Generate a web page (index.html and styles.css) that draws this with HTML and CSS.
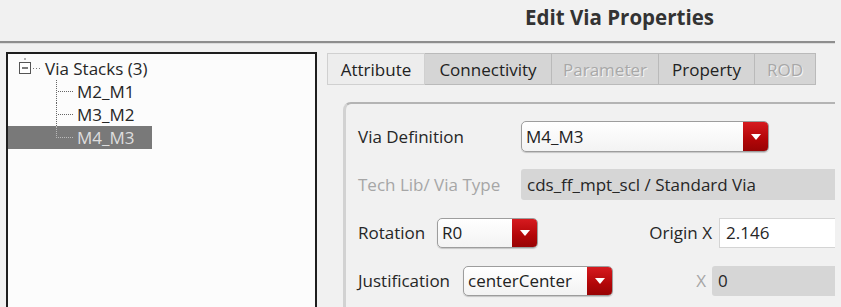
FILE: index.html
```html
<!DOCTYPE html>
<html lang="en">
<head>
    <meta charset="UTF-8">
    <title>Edit Via Properties</title>
    <link rel="stylesheet" href="styles.css">
</head>
<body>
    <div class="dialog">
        <!-- Title -->
        <div class="title">Edit Via Properties</div>
        <div class="rule"></div>

        <div class="content">
            <!-- Via stack tree -->
            <div class="tree">
                <div class="node root">
                    <svg class="expander" width="26" height="23" viewBox="0 0 26 23">
                        <line x1="6" y1="1" x2="6" y2="3" stroke="#666" stroke-width="1"/>
                        <rect x="0.5" y="5.5" width="11" height="11" fill="#fff" stroke="#555"/>
                        <line x1="3" y1="11" x2="9" y2="11" stroke="#222" stroke-width="1.2"/>
                        <line x1="14" y1="11.5" x2="22" y2="11.5" stroke="#777" stroke-dasharray="1 2"/>
                    </svg>
                    <span>Via Stacks (3)</span>
                </div>
                <div class="node leaf"><span class="branch"></span><span>M2_M1</span></div>
                <div class="node leaf"><span class="branch"></span><span>M3_M2</span></div>
                <div class="node leaf last selected"><span class="branch"></span><span>M4_M3</span></div>
            </div>

            <!-- Property editor -->
            <div class="editor">
                <div class="tabs">
                    <div class="tab active" style="width: 98px">Attribute</div>
                    <div class="tab" style="width: 127px">Connectivity</div>
                    <div class="tab disabled" style="width: 107px">Parameter</div>
                    <div class="tab" style="width: 96px">Property</div>
                    <div class="tab disabled" style="width: 61px">ROD</div>
                </div>

                <div class="panel">
                    <div class="row">
                        <label class="lbl lbl-wide">Via Definition</label>
                        <div class="select select-def">
                            <span class="value">M4_M3</span>
                            <span class="arrow"></span>
                        </div>
                    </div>

                    <div class="row">
                        <label class="lbl lbl-wide muted">Tech Lib/ Via Type</label>
                        <div class="field field-readonly grow">cds_ff_mpt_scl / Standard Via</div>
                    </div>

                    <div class="row">
                        <label class="lbl lbl-rot">Rotation</label>
                        <div class="select select-rot">
                            <span class="value">R0</span>
                            <span class="arrow"></span>
                        </div>
                        <div class="pair">
                            <label class="lbl-side">Origin X</label>
                            <div class="field field-origin">2.146</div>
                        </div>
                    </div>

                    <div class="row">
                        <label class="lbl lbl-just">Justification</label>
                        <div class="select select-just">
                            <span class="value">centerCenter</span>
                            <span class="arrow"></span>
                        </div>
                        <div class="pair">
                            <label class="lbl-side muted">X</label>
                            <div class="field field-readonly field-x">0</div>
                        </div>
                    </div>
                </div>
            </div>
        </div>
    </div>
</body>
</html>
```

FILE: styles.css
```css
/* General Reset */
* {
    margin: 0;
    padding: 0;
    box-sizing: border-box;
}

body {
    font-family: 'Open Sans', 'Noto Sans', sans-serif;
    font-size: 17px;
    color: #262626;
    background-color: #f1f1f1;
    width: 841px;
    height: 307px;
    overflow: hidden;
}

.dialog {
    width: 835px;
    height: 307px;
    overflow: hidden;
}

/* Title */
.title {
    height: 41px;
    line-height: 34px;
    padding-left: 404px;
    text-align: center;
    font-size: 20.5px;
    font-weight: 700;
    color: #333;
}

.rule {
    border-top: 2px solid #8e8e8e;
    border-bottom: 1px solid #dcdcdc;
}

.content {
    display: flex;
    padding: 8px 0 0 6px;
}

/* Tree */
.tree {
    width: 311px;
    height: 300px;
    flex-shrink: 0;
    background-color: #fcfcfc;
    border: 2px solid #1e1e1e;
    padding-top: 3px;
}

.node {
    display: flex;
    align-items: center;
    width: 144px;
    height: 23px;
    white-space: nowrap;
}

.node.root {
    padding-left: 11px;
}

.node.leaf {
    padding-left: 48px;
}

.node.selected {
    background-color: #797979;
    color: #dedede;
}

.branch {
    position: relative;
    width: 21px;
    height: 23px;
    flex-shrink: 0;
}

.branch::before {
    content: "";
    position: absolute;
    left: 0;
    top: 0;
    height: 23px;
    border-left: 1px dotted #666;
}

.node.last .branch::before {
    height: 12px;
}

.branch::after {
    content: "";
    position: absolute;
    left: 2px;
    top: 11px;
    width: 15px;
    border-top: 1px dotted #666;
}

.node.selected .branch::before,
.node.selected .branch::after {
    border-color: #bbb;
}

/* Editor */
.editor {
    flex: 1;
    margin: 1px 0 0 10px;
}

.tabs {
    display: flex;
    height: 32px;
}

.tab {
    display: flex;
    align-items: center;
    justify-content: center;
    border: 1px solid #bababa;
    border-left: none;
    background-color: #d5d5d5;
    color: #222;
}

.tab.active {
    background-color: #ededed;
    border-left: 1px solid #c8c8c8;
    border-color: #d0d0d0;
}

.tab.disabled {
    color: #a8a8a8;
    text-shadow: 1px 1px 0 #f4f4f4;
}

.panel {
    margin: 17px 0 0 16px;
    height: 220px;
    border-top: 2px solid #b4b4b4;
    border-left: 3px solid #d2d2d2;
    border-top-left-radius: 8px;
    padding: 17px 0 0 12px;
    display: flex;
    flex-direction: column;
    gap: 17px;
}

.row {
    display: flex;
    align-items: center;
    height: 31px;
}

.lbl {
    flex-shrink: 0;
    white-space: nowrap;
}

.lbl-wide { width: 163px; }
.lbl-rot { width: 79px; }
.lbl-just { width: 105px; }

.muted {
    color: #a6a6a6;
}

/* Dropdowns */
.select {
    display: flex;
    height: 31px;
    border: 1px solid #9d9d9d;
    border-radius: 5px;
    background: linear-gradient(#ffffff, #f3f3f3);
    box-shadow: 0 1px 1px rgba(0, 0, 0, 0.18);
    overflow: hidden;
    flex-shrink: 0;
}

.select-def { width: 248px; }
.select-rot { width: 101px; height: 30px; }
.select-just { width: 150px; height: 30px; }

.select .value {
    flex: 1;
    display: flex;
    align-items: center;
    padding-left: 4px;
    color: #222;
    white-space: nowrap;
    overflow: hidden;
}

.select .arrow {
    width: 25px;
    flex-shrink: 0;
    display: flex;
    align-items: center;
    justify-content: center;
    background: linear-gradient(#d61a1f, #b20608 60%, #980304);
}

.select .arrow::after {
    content: "";
    border-left: 5px solid transparent;
    border-right: 5px solid transparent;
    border-top: 6px solid #fff;
}

/* Text fields */
.field {
    height: 31px;
    display: flex;
    align-items: center;
    padding-left: 6px;
    white-space: nowrap;
}

.grow {
    flex: 1;
}

.field-readonly {
    background-color: #d6d6d6;
    border-radius: 3px 0 0 3px;
    color: #262626;
}

.pair {
    margin-left: auto;
    display: flex;
    align-items: center;
}

.lbl-side {
    white-space: nowrap;
}

.field-origin {
    width: 116px;
    height: 30px;
    margin-left: 7px;
    background-color: #fff;
    border: 1px solid #d4d4d4;
    border-right: none;
}

.field-x {
    width: 123px;
    height: 30px;
    margin-left: 6px;
}
```
